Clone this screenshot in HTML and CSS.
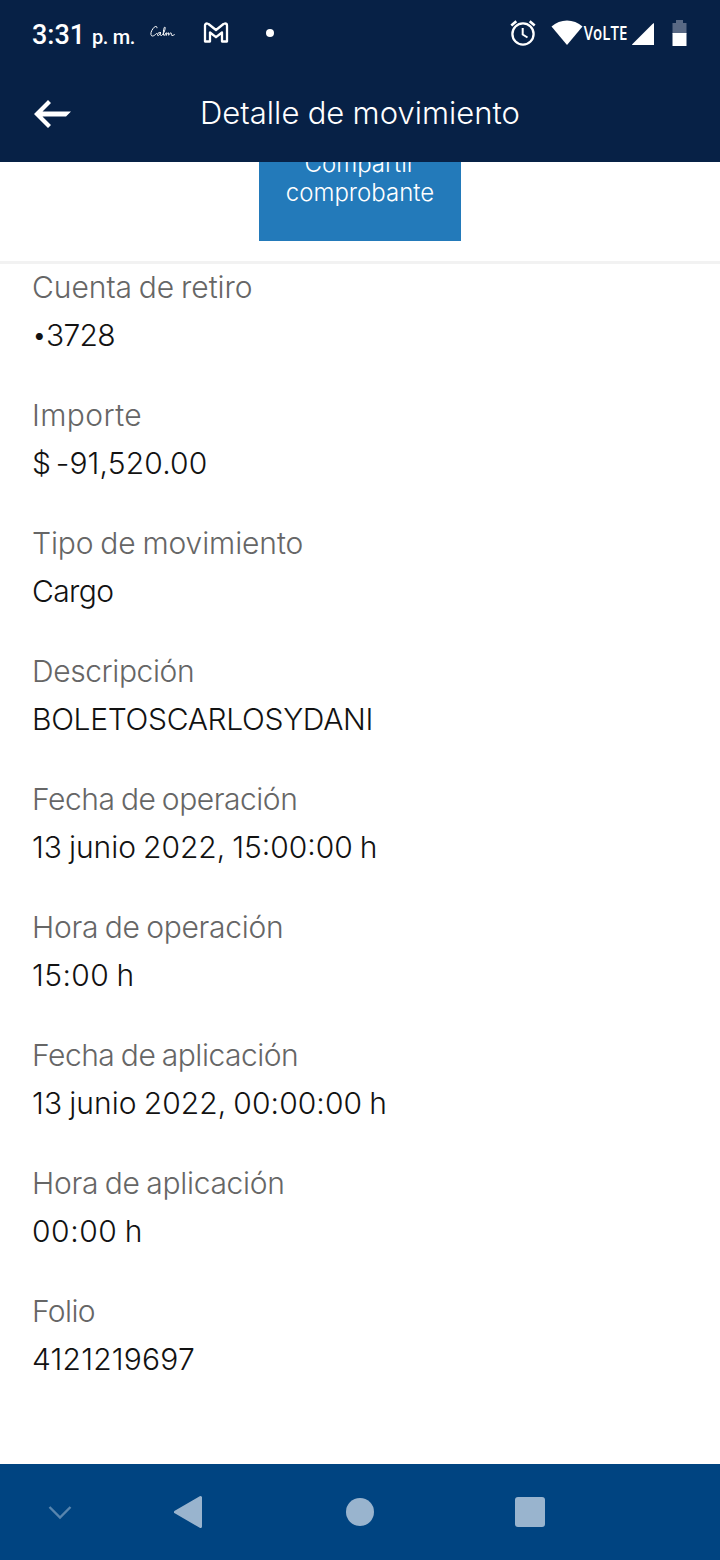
FILE: index.html
```html
<!DOCTYPE html>
<html lang="es">
<head>
<meta charset="utf-8">
<title>Detalle de movimiento</title>
<link rel="stylesheet" href="styles.css">
</head>
<body>
<div class="screen">
  <header class="top">
    <div class="status">
      <span class="clock">3:31 <small>p. m.</small></span>
      <svg class="calm" width="26" height="16" viewBox="0 0 26 16" fill="none" stroke="#fff" stroke-width="1" stroke-linecap="round" stroke-linejoin="round"><path d="M7 2.8C7.2.8 5.200.8 3.300 3.200C.5 6.500 0 11 2.500 11C4 11 5.500 9.500 6.500 8.500M10.500 7.500C8.500 6.800 7 9 7.600 10.300C8.500 11.300 10 9.500 10.500 7.500C10.200 9.500 10.300 11 11.500 10.500C14 9 16 2.500 14.800 2C13.500 2 12.800 10.500 14 10.500C15 10.500 15.500 8 16.300 7.700C16.600 8.500 16 10 16.200 10.500C16.800 9 17.800 7.500 18.500 7.800C18.900 8.500 18.500 9.700 18.700 10.300C19.300 8.800 20.400 7.500 21.200 8C21.600 9 21 10.400 22 10.500C23 10.600 23.500 10 24.300 9.700"/></svg>
      <svg class="mail" width="26" height="22" viewBox="0 0 26 22" fill="none" stroke="#fff" stroke-width="2.300" stroke-linejoin="round"><path d="M2 3.500Q2 1.500 4 1.500L5.500 2L13 8L20.500 2L22 1.500Q24 1.500 24 3.500V19.500H19V10.500L13 15.200L7 10.500V19.500H2Z"/></svg>
      <i class="dot"></i>
      <svg class="alarm" width="26" height="28" viewBox="0 0 26 28" fill="none" stroke="#fff" stroke-width="2.300"><circle cx="13" cy="15" r="10.600"/><path d="M12.700 9V15.500L17.500 18.500" stroke-width="2"/><path d="M1.300 6.500L6.300 2.200M24.700 6.500L19.700 2.200" stroke-width="2.600"/></svg>
      <svg class="wifi" width="32" height="26" viewBox="0 0 32 26" fill="#fff"><path d="M.5 6.500C9-1.600 23-1.600 31.500 6.500L16 25Z"/></svg>
      <span class="volte">VoLTE</span>
      <svg class="signal" width="23" height="23" viewBox="0 0 23 23" fill="#fff"><path d="M22 0V22H1Q-.5 22 .5 21L20.500 1Z"/></svg>
      <svg class="battery" width="15" height="27" viewBox="0 0 15 27"><path d="M4 0H11V3H14.500V14H.5V3H4Z" fill="#596984"/><path d="M.5 13H14.500V26H.5Z" fill="#fff"/></svg>
    </div>
    <div class="bar">
      <svg class="back" width="38" height="30" viewBox="0 0 38 30" fill="#fff"><path d="M0 15L14 1L17 4L8.500 12.500H37L32 17.500H8.500L17 26L14 29Z"/></svg>
      <h1 class="title">Detalle de movimiento</h1>
    </div>
  </header>
  <main class="content">
    <div class="share-row"><button class="share">Compartir<br>comprobante</button></div>
    <dl class="details">
      <div class="item account"><dt>Cuenta de retiro</dt><dd><span class="bullet">•</span>3728</dd></div>
      <div class="item amount"><dt>Importe</dt><dd>$ -91,520.00</dd></div>
      <div class="item kind"><dt>Tipo de movimiento</dt><dd>Cargo</dd></div>
      <div class="item description"><dt>Descripción</dt><dd>BOLETOSCARLOSYDANI</dd></div>
      <div class="item op-date"><dt>Fecha de operación</dt><dd>13 junio 2022, 15:00:00 h</dd></div>
      <div class="item op-time"><dt>Hora de operación</dt><dd>15:00 h</dd></div>
      <div class="item ap-date"><dt>Fecha de aplicación</dt><dd>13 junio 2022, 00:00:00 h</dd></div>
      <div class="item ap-time"><dt>Hora de aplicación</dt><dd>00:00 h</dd></div>
      <div class="item folio"><dt>Folio</dt><dd>4121219697</dd></div>
    </dl>
  </main>
  <nav class="nav">
    <svg width="720" height="96" viewBox="0 0 720 96"><path d="M49.500 43L60 53.500L70.500 43" fill="none" stroke="#5885ae" stroke-width="2.400"/><path d="M175.500 48L200.500 33.500V62.500Z" fill="#99b4ce" stroke="#99b4ce" stroke-width="3" stroke-linejoin="round"/><circle cx="360" cy="48" r="14" fill="#99b4ce"/><rect x="515" y="33" width="30" height="30" rx="3" fill="#99b4ce"/></svg>
  </nav>
</div>
</body>
</html>
```
FILE: styles.css
```css
* { box-sizing: border-box; }
body { margin: 0; font-family: Inter, "Open Sans", sans-serif; font-weight: 300; background: #fff; }
.screen { width: 720px; height: 1560px; display: flex; flex-direction: column; overflow: hidden; }
.top { height: 162px; flex: none; background: #072146; color: #fff; }
.status { height: 66px; display: flex; align-items: flex-start; padding-left: 32px; }
.status svg { flex: none; }
.clock { width: 118px; font: 500 27px/36px Roboto, sans-serif; padding-top: 17px; white-space: nowrap; }
.clock small { font-size: 20px; letter-spacing: -.3px; }
.calm { margin-top: 25px; }
.mail { margin: 22px 0 0 27px; }
.dot { width: 8px; height: 8px; border-radius: 50%; background: #fff; margin: 29px 0 0 37px; }
.alarm { margin: 19px 0 0 236px; }
.wifi { margin: 20px 0 0 15px; }
.volte { width: 49px; padding: 19px 0 0 1px; font: 600 20px/28px "Open Sans", sans-serif; transform: scaleX(.75); transform-origin: left; }
.signal { margin-top: 23px; }
.battery { margin: 20px 0 0 16.500px; }
.bar { height: 96px; display: flex; padding-left: 34px; }
.back { margin-top: 33px; }
.title { margin: 27px 0 0 128px; font-size: 31px; line-height: 40px; font-weight: 300; letter-spacing: .030px; word-spacing: -.500px; white-space: nowrap; }
.content { flex: 1; min-height: 0; overflow: hidden; }
.share-row { height: 102px; border-bottom: 3px solid #f2f2f2; display: flex; justify-content: center; align-items: flex-start; }
.share { width: 202px; height: 120px; margin-top: -41px; border: 0; padding: 0 0 6px; background: #237aba; color: #fff; font: 300 24px/29px Inter, sans-serif; }
.details { margin: 0; padding: 3px 32px; }
.item { height: 128px; }
dt, dd { margin: 0; font-size: 30px; line-height: 40px; white-space: nowrap; word-spacing: -1.500px; }
dt { color: #666; }
dd { color: #121212; margin-top: 8px; }
.bullet { display: inline-block; line-height: 1; font-size: 26px; margin-right: 0; transform: translateY(-2px); }

.account dt { letter-spacing: -.040px; }
.account dd { letter-spacing: -.700px; }
.amount dt { letter-spacing: .400px; }
.amount dd { letter-spacing: .150px; word-spacing: -4px; }
.kind dt { letter-spacing: -.100px; }
.kind dd { letter-spacing: -.600px; }
.description dt { letter-spacing: -.400px; }
.description dd { letter-spacing: -.320px; }
.op-date dt { letter-spacing: -.470px; }
.op-date dd { letter-spacing: 0; }
.op-time dt { letter-spacing: -.290px; }
.op-time dd { letter-spacing: .400px; }
.ap-date dt { letter-spacing: -.480px; }
.ap-date dd { letter-spacing: .080px; }
.ap-time dt { letter-spacing: -.290px; }
.ap-time dd { letter-spacing: .550px; }
.folio dt { letter-spacing: -.600px; }
.folio dd { letter-spacing: .200px; }
.nav { height: 96px; background: #004481; flex: none; }
.nav svg { display: block; }
```
